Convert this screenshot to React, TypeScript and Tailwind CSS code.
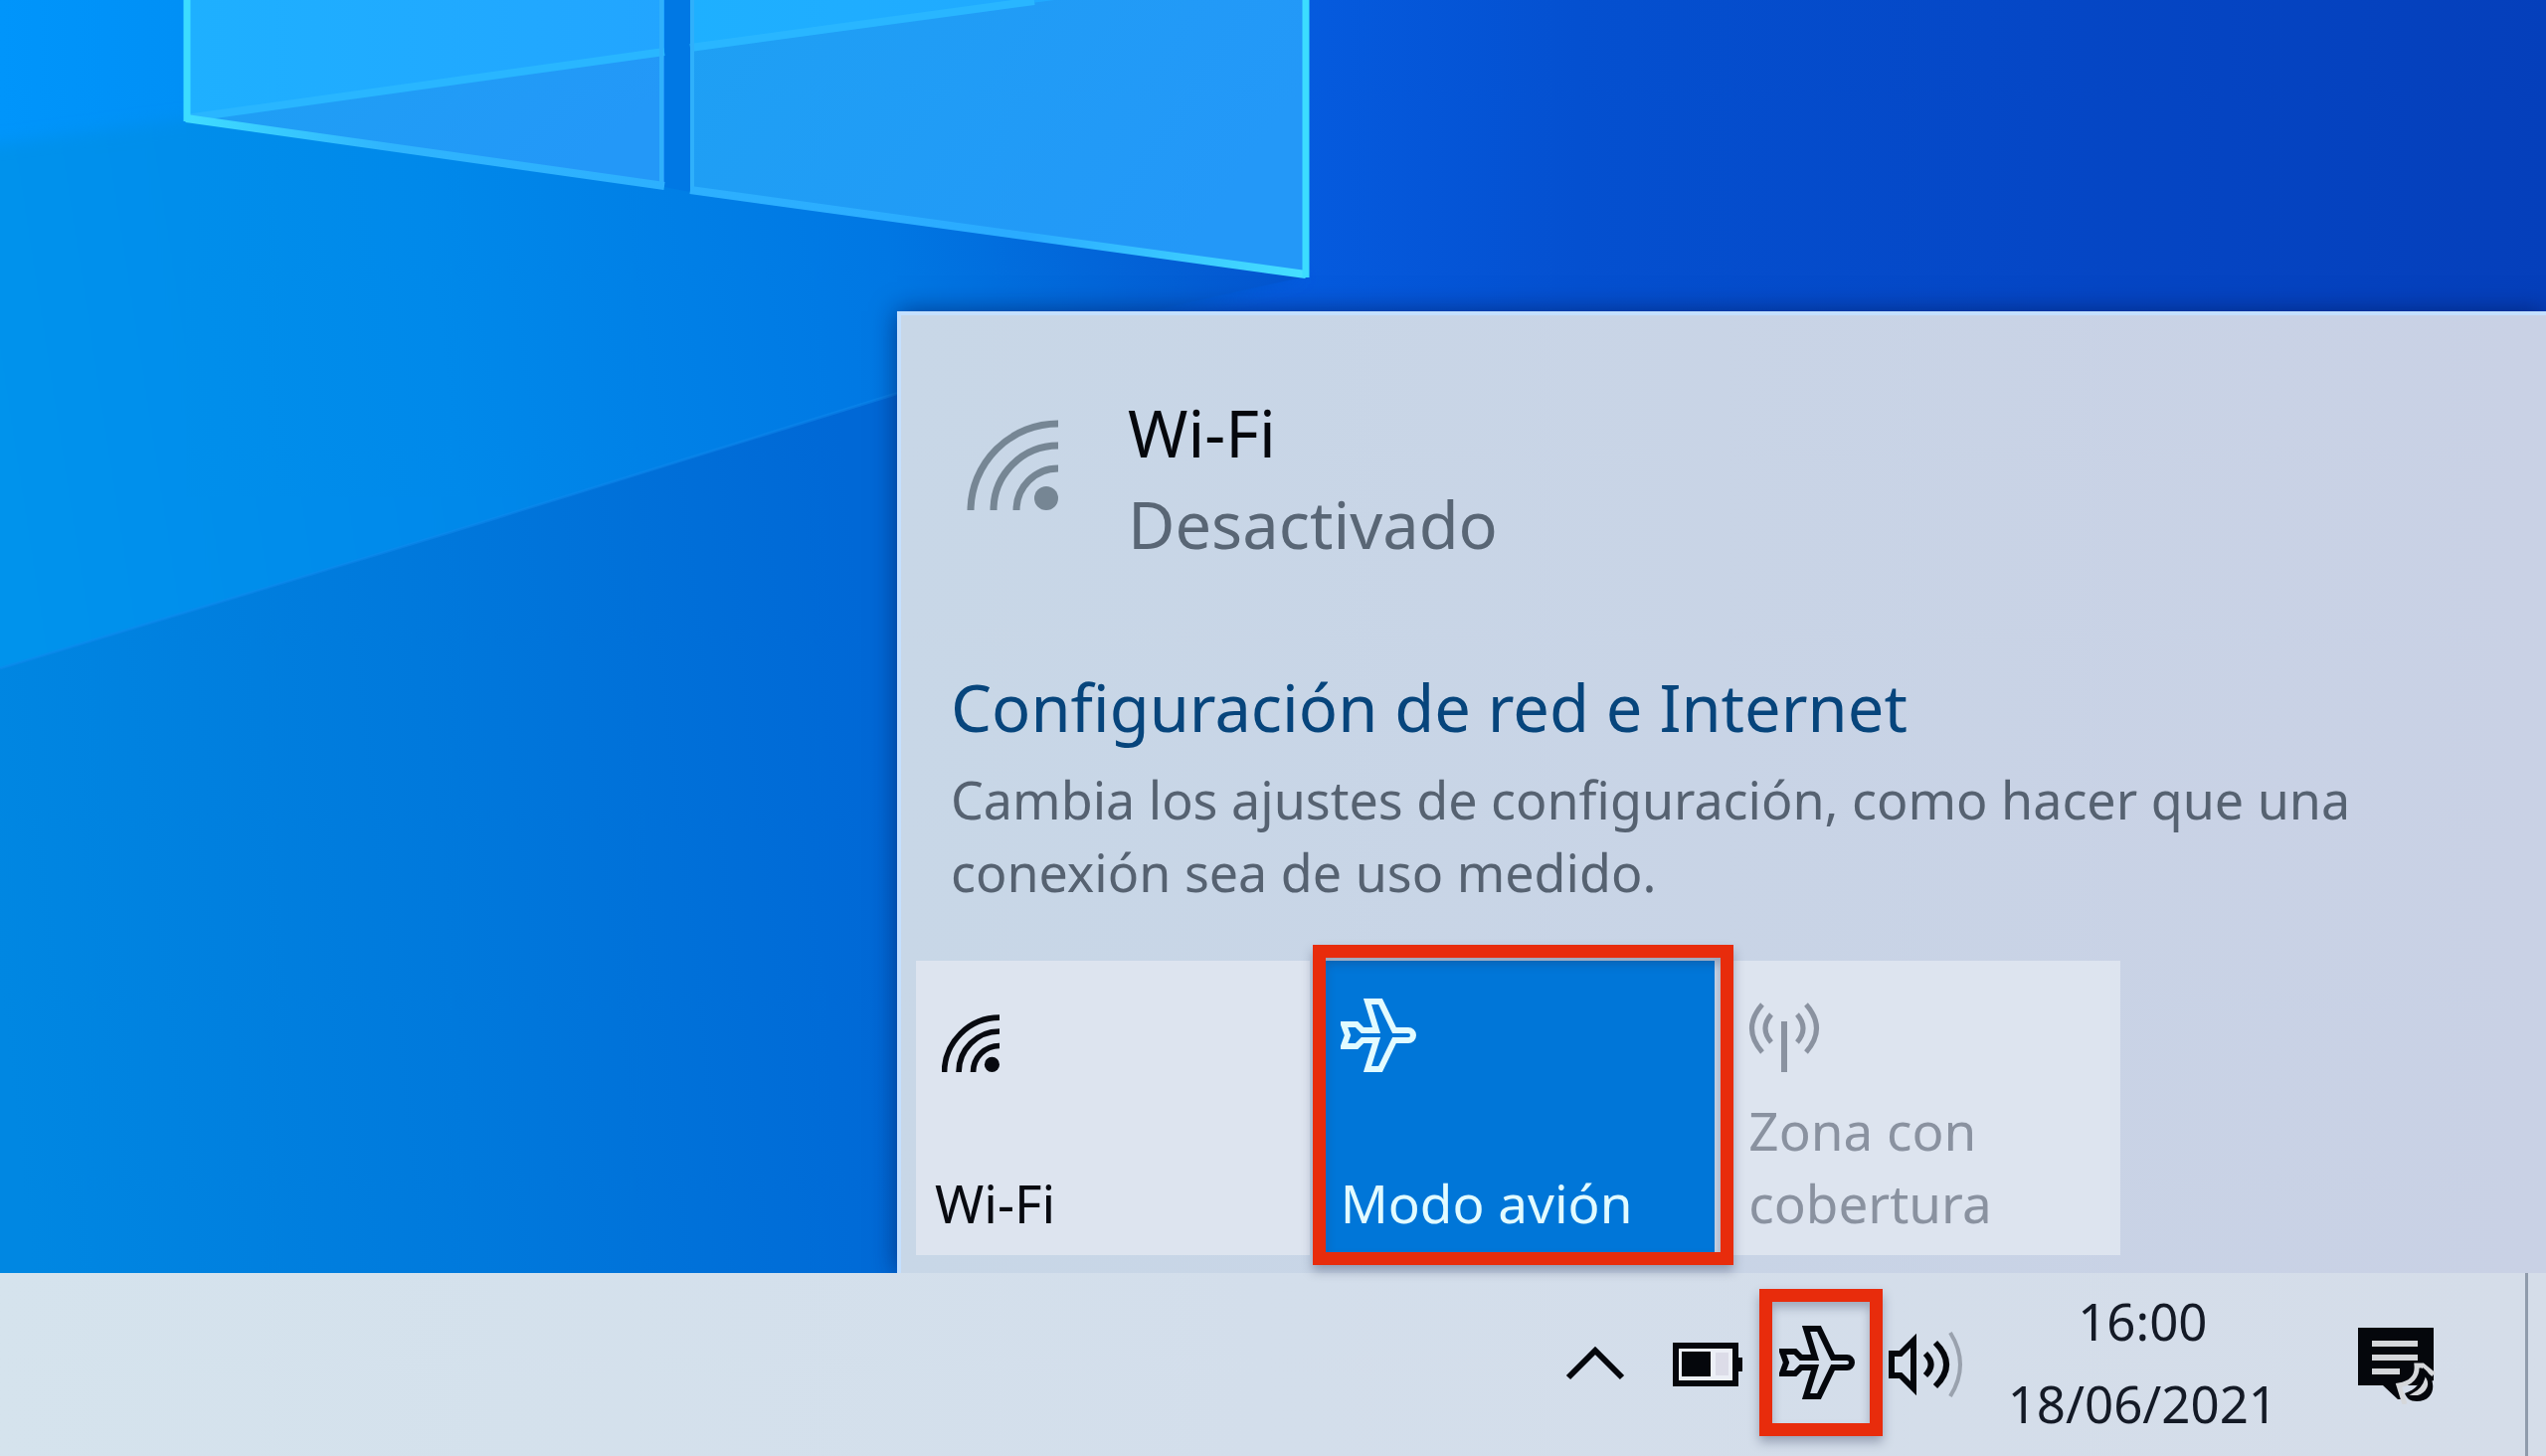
import type { ReactNode } from "react";

function Wallpaper() {
  return (
    <svg
      className="absolute inset-0 h-full w-full"
      viewBox="0 0 2560 1464"
      preserveAspectRatio="xMidYMid slice"
      aria-hidden="true"
    >
      <defs>
        <linearGradient id="sky" x1="0" y1="0" x2="1" y2="0">
          <stop offset="0" stopColor="#0095fb" />
          <stop offset="0.25" stopColor="#0083ea" />
          <stop offset="0.5" stopColor="#055ce0" />
          <stop offset="0.62" stopColor="#0450d0" />
          <stop offset="0.8" stopColor="#0547c6" />
          <stop offset="1" stopColor="#053fbb" />
        </linearGradient>
        <linearGradient id="beam" gradientUnits="userSpaceOnUse" x1="0" y1="500" x2="1300" y2="300">
          <stop offset="0" stopColor="#0093ec" />
          <stop offset="0.35" stopColor="#0089ea" />
          <stop offset="0.7" stopColor="#0077e3" />
          <stop offset="1" stopColor="#0455cf" />
        </linearGradient>
        <linearGradient id="floor" gradientUnits="userSpaceOnUse" x1="0" y1="1000" x2="900" y2="900">
          <stop offset="0" stopColor="#0087e2" />
          <stop offset="0.5" stopColor="#0079dc" />
          <stop offset="1" stopColor="#0068d6" />
        </linearGradient>
        <linearGradient id="paneA" x1="0" y1="0" x2="1" y2="0">
          <stop offset="0" stopColor="#1eb0ff" />
          <stop offset="1" stopColor="#22a5ff" />
        </linearGradient>
        <linearGradient id="paneB" x1="0" y1="0" x2="1" y2="0.3">
          <stop offset="0" stopColor="#1ea0f4" />
          <stop offset="1" stopColor="#2398f8" />
        </linearGradient>
        <linearGradient id="edge" gradientUnits="userSpaceOnUse" x1="187" y1="120" x2="1313" y2="278">
          <stop offset="0" stopColor="#3fdcff" />
          <stop offset="0.18" stopColor="#2fb4fd" />
          <stop offset="0.75" stopColor="#2aabff" />
          <stop offset="1" stopColor="#46e0ff" />
        </linearGradient>
        <filter id="soft" x="-10%" y="-10%" width="120%" height="120%">
          <feGaussianBlur stdDeviation="8" />
        </filter>
      </defs>
      <rect width="2560" height="1464" fill="url(#sky)" />
      <path d="M-40 150 L187 120 L1313 278 L1100 330 L900 400 V1464 H-40 Z" fill="url(#beam)" filter="url(#soft)" />
      <path d="M187 120 L1313 278 L1160 312 H902 V500 H187 Z" fill="url(#beam)" />
      <path d="M0 672 L450 536 L920 390 V1464 H0 Z" fill="url(#floor)" />
      <path d="M0 672 L450 536 L920 390" fill="none" stroke="#1089ee" strokeOpacity="0.5" strokeWidth="3" />
      <path d="M668 0 H694 V193 L668 188 Z" fill="#0078e4" />
      <path d="M187 0 H668 V188 L187 120 Z" fill="url(#paneA)" />
      <path d="M694 0 H1313 V278 L694 192 Z" fill="url(#paneA)" />
      <path d="M187 120 L668 52 V188 Z" fill="url(#paneB)" />
      <path d="M694 48 L1060 0 H1313 V278 L694 192 Z" fill="url(#paneB)" />
      <path d="M187 119 L668 52 M694 48 L1040 1" fill="none" stroke="#29b6ff" strokeWidth="8" />
      <path d="M665 0 V187 M696 0 V192" fill="none" stroke="#2fb0fb" strokeWidth="4" />
      <path d="M187 119 L668 187 M694 191 L1313 276" fill="none" stroke="url(#edge)" strokeWidth="8" />
      <path d="M188 0 V122 M1313 0 V279" fill="none" stroke="#3cdcff" strokeWidth="7" />
    </svg>
  );
}

function WifiIcon({ className, stroke }: { className: string; stroke: number }) {
  return (
    <svg className={className} viewBox="0 0 92 92" fill="none" stroke="currentColor" strokeWidth={stroke} aria-hidden="true">
      <path d="M4 92 A88 88 0 0 1 92 5" />
      <path d="M27 92 A65 65 0 0 1 92 27" />
      <path d="M50 92 A42 42 0 0 1 92 50" />
      <circle cx="80" cy="80" r="12" fill="currentColor" stroke="none" />
    </svg>
  );
}

function PlaneIcon() {
  return (
    <svg className="size-[76px]" viewBox="0 0 76 76" fill="none" stroke="currentColor" strokeWidth="6" aria-hidden="true">
      <path d="M3 27 H16 L22 33 H36 L27 4 H40 L54 33 H68 A5 5 0 0 1 68 43 H54 L40 72 H27 L36 43 H22 L16 49 H3 L7 38 Z" />
    </svg>
  );
}

function HotspotIcon() {
  return (
    <svg className="size-[72px]" viewBox="0 0 72 72" fill="none" stroke="currentColor" strokeWidth="5" aria-hidden="true">
      <path d="M36 19 V70" strokeWidth="6" />
      <path d="M14 2 Q-7 26 14 50 M58 2 Q79 26 58 50" />
      <path d="M23 12 Q11 26 23 40 M49 12 Q61 26 49 40" />
    </svg>
  );
}

function ChevronIcon() {
  return (
    <svg className="h-9 w-[62px]" viewBox="0 0 62 36" fill="none" stroke="currentColor" strokeWidth="6" aria-hidden="true">
      <path d="M4 31 L31 4 L58 31" />
    </svg>
  );
}

function BatteryIcon() {
  return (
    <svg className="h-11 w-[72px]" viewBox="0 0 72 44" aria-hidden="true">
      <rect x="4" y="3" width="60" height="38" fill="#eceff6" stroke="currentColor" strokeWidth="6" />
      <rect x="10" y="9" width="29" height="25" fill="currentColor" />
      <rect x="44" y="10" width="13" height="23" fill="#dcdce8" />
      <rect x="66" y="15" width="5" height="14" fill="currentColor" />
    </svg>
  );
}

function VolumeIcon() {
  return (
    <svg className="h-[70px] w-20" viewBox="0 0 80 70" fill="none" stroke="currentColor" strokeWidth="6" aria-hidden="true">
      <path d="M5 24 H14 L27 11 V59 L14 46 H5 Z" />
      <path d="M39 24 Q50 35 39 46" />
      <path d="M49 13 Q71 35 49 57" />
      <path d="M64 3 Q84 35 64 67" stroke="#9aa2ae" strokeWidth="4" />
    </svg>
  );
}

function NotificationIcon() {
  return (
    <svg className="size-20" viewBox="0 0 80 80" aria-hidden="true">
      <path d="M1 3 H77 V56 L60 61 H44 L46 75 H41 L26 61 H1 Z" fill="currentColor" />
      <path d="M15 19 H61 M15 33 H61 M15 47 H43" stroke="#d5d7da" strokeWidth="6" />
      <path d="M77 50 L66 41 H60 C61 52 54 59 42 61 L48 80" fill="none" stroke="#d5d7da" strokeWidth="5" />
      <path d="M66 43 C81 54 80 77 60 77 C53 77 50 74 48 69 C59 66 67 57 66 43 Z" fill="currentColor" />
      <path d="M69 55 C73 62 66 71 56 70 C62 67 67 62 69 55 Z" fill="#d5d7da" stroke="#d5d7da" strokeWidth="2" />
    </svg>
  );
}

function Highlight({ className }: { className: string }) {
  return (
    <span
      className={`pointer-events-none absolute border-[13px] border-[#e82c0c] shadow-[0_6px_10px_rgba(40,50,80,0.35),inset_0_6px_10px_rgba(40,50,80,0.3)] ${className}`}
    />
  );
}

function Tile({ label, icon, className, children, disabled, pressed }: {
  label: string;
  icon: ReactNode;
  className: string;
  children?: ReactNode;
  disabled?: boolean;
  pressed?: boolean;
}) {
  return (
    <button
      type="button"
      disabled={disabled}
      aria-pressed={pressed}
      className={`relative flex min-h-[296px] flex-col justify-between pr-12 pb-4 text-left text-[53px] leading-[73px] ${className}`}
    >
      {icon}
      <span>{label}</span>
      {children}
    </button>
  );
}

export default function App() {
  return (
    <div className="relative flex min-h-screen flex-col overflow-hidden bg-[#0078e0] font-['Noto_Sans',sans-serif]">
      <Wallpaper />
      <main className="relative flex flex-1 items-end pl-[902px]">
        <section
          aria-label="Red"
          className="flex-1 border-t-4 border-l-4 border-[#c4e0ff] bg-linear-to-r from-[#c8d7e7] to-[#c9d1e5] pt-[72px] pb-[18px] shadow-[0_0_24px_rgba(0,20,80,0.6)]"
        >
          <div className="flex items-start gap-[70px] pl-[66px]">
            <WifiIcon className="mt-8 size-[92px] text-[#768694]" stroke={7} />
            <div className="text-[65px] leading-[92px]">
              <h1 className="text-[#05070c]">Wi-Fi</h1>
              <p className="text-[#596675]">Desactivado</p>
            </div>
          </div>
          <div className="mt-[94px] pl-[50px]">
            <a href="#configuracion" className="block text-[65px] leading-[88px] text-[#07457c]">
              Configuración de red e Internet
            </a>
            <p className="mt-3 max-w-[1500px] text-[52px] leading-[73px] text-[#566271]">
              Cambia los ajustes de configuración, como hacer que una conexión sea de uso medido.
            </p>
          </div>
          <div className="mt-[53px] ml-[15px] grid max-w-[1211px] grid-cols-3 gap-3">
            <Tile
              label="Wi-Fi"
              icon={<WifiIcon className="ml-[7px] size-[58px]" stroke={9} />}
              className="bg-[#dde4ef] pt-[54px] pl-[19px] text-[#080a10]"
            />
            <Tile
              label="Modo avión"
              pressed
              icon={<PlaneIcon />}
              className="z-10 bg-[#0076d8] pt-[37px] pl-[19px] text-[#e2fbff]"
            >
              <Highlight className="-top-4 -right-[19px] -bottom-[10px] -left-[9px]" />
            </Tile>
            <Tile
              label="Zona con cobertura"
              disabled
              icon={<HotspotIcon />}
              className="bg-[#dde4ef] pt-[42px] pl-[22px] text-[#8a92a0]"
            />
          </div>
        </section>
      </main>

      <footer className="relative flex items-stretch justify-end bg-linear-to-r from-[#d5e3ed] via-[#d3deeb] to-[#d5dde9] text-[#05070c]">
        <div className="flex items-center">
          <button type="button" aria-label="Mostrar iconos ocultos" className="mr-[46px]">
            <ChevronIcon />
          </button>
          <button type="button" aria-label="Batería" className="mr-4">
            <BatteryIcon />
          </button>
          <button type="button" aria-label="Modo avión activado" className="relative mr-1 mb-1 py-9 pr-7 pl-5">
            <PlaneIcon />
            <Highlight className="inset-0" />
          </button>
          <button type="button" aria-label="Volumen" className="mr-[42px]">
            <VolumeIcon />
          </button>
          <button type="button" className="mr-20 pt-[7px] pb-[11px] text-center text-[51px] leading-[83px] text-[#141a26]">
            <time className="block">16:00</time>
            <time className="block">18/06/2021</time>
          </button>
          <button type="button" aria-label="Notificaciones" className="mr-[89px]">
            <NotificationIcon />
          </button>
        </div>
        <button type="button" aria-label="Mostrar escritorio" className="w-[21px] border-l-[3px] border-[#8f9bab]" />
      </footer>
    </div>
  );
}
